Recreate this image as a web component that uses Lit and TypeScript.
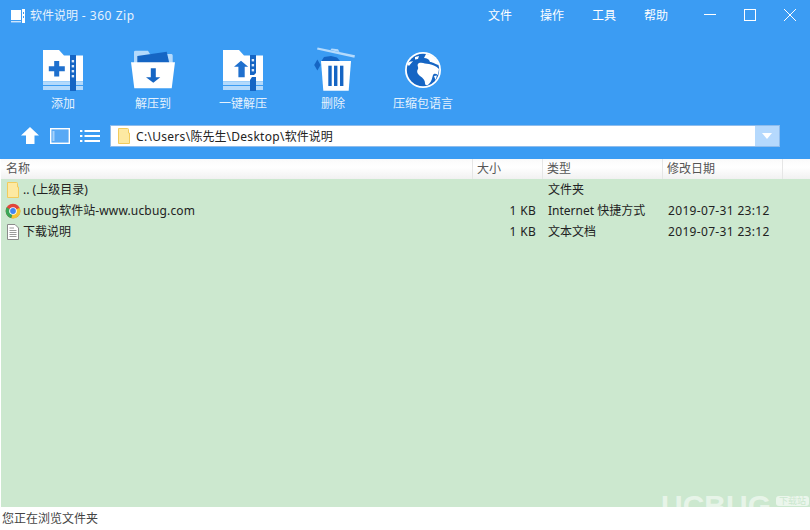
import { LitElement, html, css, svg } from 'lit';
import { customElement } from 'lit/decorators.js';

const DARK = '#1565c4';
const LIGHT = '#b4dafc';

// Zip folder body shared by the add and one-click icons
const zipBody = svg`
	<path d="M4 1H20L25 6.5H44V32.5H4Z" fill="#fff"/>
	<rect x="4" y="33" width="40" height="3" fill="${LIGHT}"/>
	<rect x="4" y="37" width="40" height="4" fill="${LIGHT}"/>
`;

const addIcon = html`<svg width="48" height="44" viewBox="0 0 48 44">
	${zipBody}
	<rect x="31" y="6" width="6" height="36" fill="${DARK}"/>
	<rect x="32.7" y="11" width="2.4" height="2.4" fill="#dbe9f8"/>
	<rect x="32.7" y="16" width="2.4" height="2.4" fill="#dbe9f8"/>
	<rect x="32.7" y="21" width="2.4" height="2.4" fill="#dbe9f8"/>
	<rect x="32.7" y="26" width="2.4" height="2.4" fill="#dbe9f8"/>
	<path d="M15.2 12H20.2V17.2H25.8V22.2H20.2V27.5H15.2V22.2H9.8V17.2H15.2Z" fill="#1f70ce"/>
</svg>`;

const extractIcon = html`<svg width="48" height="44" viewBox="0 0 48 44">
	<path d="M5 3Q5 1.7 6.5 1.7H19L21 5H42.5Q43.7 5 43.7 6.5V14H5Z" fill="${LIGHT}"/>
	<path d="M8.3 7L37.7 2.7L40.3 14H8.3Z" fill="${DARK}"/>
	<path d="M2 13.3H46L42.7 39.3H5.3Z" fill="#fff"/>
	<path d="M21.8 19.3H26.8V28.3H31.3L24.3 33.8L17 28.3H21.8Z" fill="${DARK}"/>
</svg>`;

const oneClickIcon = html`<svg width="48" height="44" viewBox="0 0 48 44">
	${zipBody}
	<path d="M31 6H37V24L35 26H31Z" fill="${DARK}"/>
	<path d="M31 31L33 28H37V42H31Z" fill="${DARK}"/>
	<rect x="32.7" y="10" width="2.4" height="2.4" fill="#dbe9f8"/>
	<rect x="32.7" y="15" width="2.4" height="2.4" fill="#dbe9f8"/>
	<rect x="32.7" y="20" width="2.4" height="2.4" fill="#dbe9f8"/>
	<path d="M22 11.7L29.2 17.8H25.7V28.3H19.4V17.8H15Z" fill="#1f70ce"/>
</svg>`;

const deleteIcon = html`<svg width="48" height="44" viewBox="0 0 48 44">
	<path d="M8 0.5L8.6 -1.5L46 6.3L45.4 8.8Z" fill="${LIGHT}"/>
	<path d="M21.5 1L22.5 -0.6L29 0.2L30.5 3Z" fill="${LIGHT}"/>
	<path d="M12.5 12L15 8L22 7L28 8.5L31 12Z" fill="${DARK}"/>
	<path d="M5.2 16L8.4 10.5L11.5 16L8.4 21.5Z" fill="${DARK}"/>
	<path d="M12 12H42L39.7 41.7H14.3Z" fill="#fff"/>
	<rect x="19.3" y="16.7" width="3.4" height="20.3" fill="${DARK}"/>
	<rect x="25" y="16.7" width="3.4" height="20.3" fill="${DARK}"/>
	<rect x="31" y="16.7" width="3.4" height="20.3" fill="${DARK}"/>
</svg>`;

const globeIcon = html`<svg width="48" height="44" viewBox="0 0 48 44">
	<circle cx="24" cy="21" r="18" fill="#fff"/>
	<circle cx="24" cy="21" r="16.2" fill="${DARK}"/>
	<path d="M27 5C33 5.5 38 10 40 16C36 15.5 34 13 31 13C30 10 28 9 25 9Z" fill="#fff"/>
	<path d="M20 14C24 13 26 15 30 15C34 16 37 17 40 20L39 26C37 24.5 35 24 34 26C33 29 33 32 30 35C28 37 26 36.5 26 34C26 31 24 29 21 27C19 25 17 23 19 20C20 18 17 16 20 14Z" fill="#fff"/>
	<path d="M8 15C10 12 12 13 14 12C13 14 11 15 10 17Z" fill="#fff"/>
	<path d="M16 8L20 7L19 10L16 10.5Z" fill="#fff"/>
	<path d="M35 27L38 26.5L36.5 31Z" fill="#fff"/>
</svg>`;

const tools = [
	{ label: '添加', icon: addIcon },
	{ label: '解压到', icon: extractIcon },
	{ label: '一键解压', icon: oneClickIcon },
	{ label: '删除', icon: deleteIcon },
	{ label: '压缩包语言', icon: globeIcon },
];

const folderIcon = html`<svg width="14" height="18" viewBox="0 0 14 18">
	<path d="M1.5 1.5H10.5Q11.5 1.5 11.5 2.5V6H12.5V16.5H1.5Z" fill="#fde9a2" stroke="#f2cb5c"/>
</svg>`;

const chromeIcon = html`<svg width="16" height="16" viewBox="0 0 16 16">
	<circle cx="8" cy="8" r="7.3" fill="#e2463a"/>
	<path d="M8 8L1.7 4.3A7.3 7.3 0 0 0 6.5 15.2Z" fill="#3ba757"/>
	<path d="M8 8L6.5 15.2A7.3 7.3 0 0 0 14.6 4.7Z" fill="#f5c533"/>
	<circle cx="8" cy="8" r="3.8" fill="#fff"/>
	<circle cx="8" cy="8" r="2.9" fill="#4285f0"/>
</svg>`;

const docIcon = html`<svg width="14" height="18" viewBox="0 0 14 18">
	<path d="M1.5 1.5H9L12.5 5V16.5H1.5Z" fill="#fff" stroke="#8a8a8a"/>
	<path d="M3.5 5H8M3.5 7.5H10.5M3.5 9.5H10.5M3.5 11.5H10.5M3.5 13.5H10.5" stroke="#9a9a9a" fill="none"/>
</svg>`;

// Latin runs are wrapped in .n so they can be spaced out without touching the CJK glyphs
const rows = [
	{ name: html`.. (上级目录)`, icon: folderIcon, size: '', type: '文件夹', date: '' },
	{ name: html`<span class="n">ucbug</span>软件站<span class="n">-www.ucbug.com</span>`, icon: chromeIcon, size: '1 KB', type: 'Internet 快捷方式', date: '2019-07-31 23:12' },
	{ name: html`下载说明`, icon: docIcon, size: '1 KB', type: '文本文档', date: '2019-07-31 23:12' },
];

@customElement('app-root')
export class AppRoot extends LitElement {

	static styles = css`
		:host {
			display: flex;
			flex-direction: column;
			width: 810px;
			height: 530px;
			overflow: hidden;
			background: #fff;
			font-family: "Noto Sans", "Noto Sans CJK SC", sans-serif;
			font-size: 12px;
			color: #222;
		}
		svg {
			display: block;
			overflow: visible;
		}
		.n {
			letter-spacing: 0.16px;
		}
		.w {
			letter-spacing: 0.3px;
		}

		/* Blue header */
		.top {
			background: #3b9cf3;
			color: #fff;
			height: 159px;
			flex: none;
		}
		.title-bar {
			display: flex;
			align-items: center;
			height: 30px;
			padding-left: 11px;
		}
		.app-icon {
			margin-top: 2px;
		}
		.title {
			margin-left: 5px;
			flex: 1;
			color: #e6f2fd;
		}
		.title .w {
			letter-spacing: 0.55px;
		}
		.menu {
			display: flex;
			gap: 28px;
			margin-right: 22px;
		}
		.win {
			display: flex;
		}
		.win div {
			width: 40px;
			height: 30px;
			display: flex;
			align-items: center;
			justify-content: center;
		}
		.tools {
			display: flex;
			margin-top: 19px;
			padding-left: 18px;
		}
		.tool {
			width: 90px;
			display: flex;
			flex-direction: column;
			align-items: center;
			gap: 3px;
		}
		.tool span {
			line-height: 16px;
			color: #e6f2fd;
			white-space: nowrap;
		}
		.nav {
			display: flex;
			align-items: center;
			gap: 10px;
			margin-top: 13px;
			padding-left: 20px;
		}
		.nav svg {
			flex: none;
		}
		.address {
			display: flex;
			align-items: center;
			width: 670px;
			height: 22px;
			box-sizing: border-box;
			background: #fff;
			border: 1px solid #8ebcec;
			padding-left: 6px;
			color: #222;
		}
		.address .path {
			flex: 1;
			margin-left: 5px;
		}
		.drop {
			width: 24px;
			height: 20px;
			background: #b5d9fd;
			display: flex;
			align-items: center;
			justify-content: center;
		}

		/* File list */
		.head, .row {
			display: grid;
			grid-template-columns: 472px 70px 120px 120px 1fr;
			margin-left: 1px;
		}
		.head {
			height: 20px;
			flex: none;
			background: linear-gradient(#fafafa, #fff 40%, #f1f1f1);
			color: #555;
			line-height: 20px;
		}
		.head div {
			padding-left: 4px;
			border-right: 1px solid #e6e6e6;
			box-sizing: border-box;
		}
		.head div:first-child {
			padding-left: 5px;
		}
		.list {
			position: relative;
			flex: 1;
			margin-left: 1px;
			overflow: hidden;
			background: #cce8cf;
		}
		.row {
			margin-left: 0;
			height: 21px;
			line-height: 21px;
			white-space: nowrap;
		}
		.name {
			display: flex;
			align-items: center;
			padding-left: 4px;
		}
		.name .ico {
			width: 16px;
			margin-right: 2px;
			display: flex;
			justify-content: center;
		}
		.size {
			text-align: right;
			padding-right: 7px;
			letter-spacing: 0.3px;
		}
		.type {
			padding-left: 5px;
		}
		.date {
			padding-left: 5px;
			letter-spacing: 0.33px;
		}

		/* Watermark clipped by the bottom of the list */
		.mark {
			position: absolute;
			right: 1px;
			top: 316px;
			display: flex;
			align-items: flex-start;
			gap: 5px;
			color: rgba(255, 255, 255, 0.55);
		}
		.mark b {
			font: bold 30px/22px "Liberation Sans", sans-serif;
		}
		.mark span {
			background: rgba(255, 255, 255, 0.6);
			color: #cce8cf;
			border-radius: 3px;
			font-size: 9px;
			line-height: 10px;
			padding: 0 3px;
			margin-top: 1px;
		}

		.status {
			height: 23px;
			flex: none;
			padding-left: 2px;
			line-height: 23px;
			color: #444;
		}
	`;

	render() {
		return html`
			<div class="top">
				<div class="title-bar">
					<svg class="app-icon" width="14" height="14" viewBox="0 0 14 14">
						<path d="M0 1H10V11H0Z" fill="#fff"/>
						<rect x="0" y="12" width="10" height="1.4" fill="#cfe6fc"/>
						<rect x="11" y="0" width="3" height="14" fill="#fff"/>
						<rect x="12" y="3" width="1" height="2" fill="#3b9cf3"/>
						<rect x="12" y="7" width="1" height="2" fill="#3b9cf3"/>
					</svg>
					<div class="title">软件说明<span class="w"> - 360 Zip</span></div>
					<div class="menu">
						<span>文件</span><span>操作</span><span>工具</span><span>帮助</span>
					</div>
					<div class="win">
						<div><svg width="12" height="12" viewBox="0 0 12 12"><path d="M0 5.5H12" stroke="#fff"/></svg></div>
						<div><svg width="12" height="12" viewBox="0 0 12 12"><rect x=".5" y=".5" width="11" height="11" fill="none" stroke="#fff"/></svg></div>
						<div><svg width="12" height="12" viewBox="0 0 12 12"><path d="M0 0L12 12M12 0L0 12" stroke="#fff"/></svg></div>
					</div>
				</div>
				<div class="tools">
					${tools.map(t => html`
						<div class="tool">${t.icon}<span>${t.label}</span></div>
					`)}
				</div>
				<div class="nav">
					<svg width="20" height="18" viewBox="0 0 20 18"><path d="M10 0L19 8.5H14.5V17H6V8.5H1Z" fill="#fff"/></svg>
					<svg width="20" height="16" viewBox="0 0 20 16">
						<rect x=".7" y=".7" width="18.6" height="14.6" fill="#58a9f5" stroke="#fff" stroke-width="1.4"/>
						<rect x="2.5" y="3" width="2" height="10" fill="#a5d2fb"/>
					</svg>
					<svg width="20" height="12" viewBox="0 0 20 12">
						<path d="M0 1H2.4M0 6H2.4M0 11H2.4" stroke="#fff" stroke-width="2"/>
						<path d="M4.5 1H20M4.5 6H20M4.5 11H20" stroke="#fff" stroke-width="2"/>
					</svg>
					<div class="address">
						${folderIcon}
						<span class="path"><span class="w">C:\\Users\\</span>陈先生<span class="w">\\Desktop\\</span>软件说明</span>
						<div class="drop"><svg width="10" height="6" viewBox="0 0 10 6"><path d="M0 0H10L5 6Z" fill="#fff"/></svg></div>
					</div>
				</div>
			</div>
			<div class="head">
				<div>名称</div><div>大小</div><div>类型</div><div>修改日期</div>
			</div>
			<div class="list">
				${rows.map(r => html`
					<div class="row">
						<div class="name"><span class="ico">${r.icon}</span><span>${r.name}</span></div>
						<div class="size">${r.size}</div>
						<div class="type">${r.type}</div>
						<div class="date">${r.date}</div>
					</div>
				`)}
				<div class="mark"><b>UCBUG</b><span>下载站</span></div>
			</div>
			<div class="status">您正在浏览文件夹</div>
		`;
	}
}
